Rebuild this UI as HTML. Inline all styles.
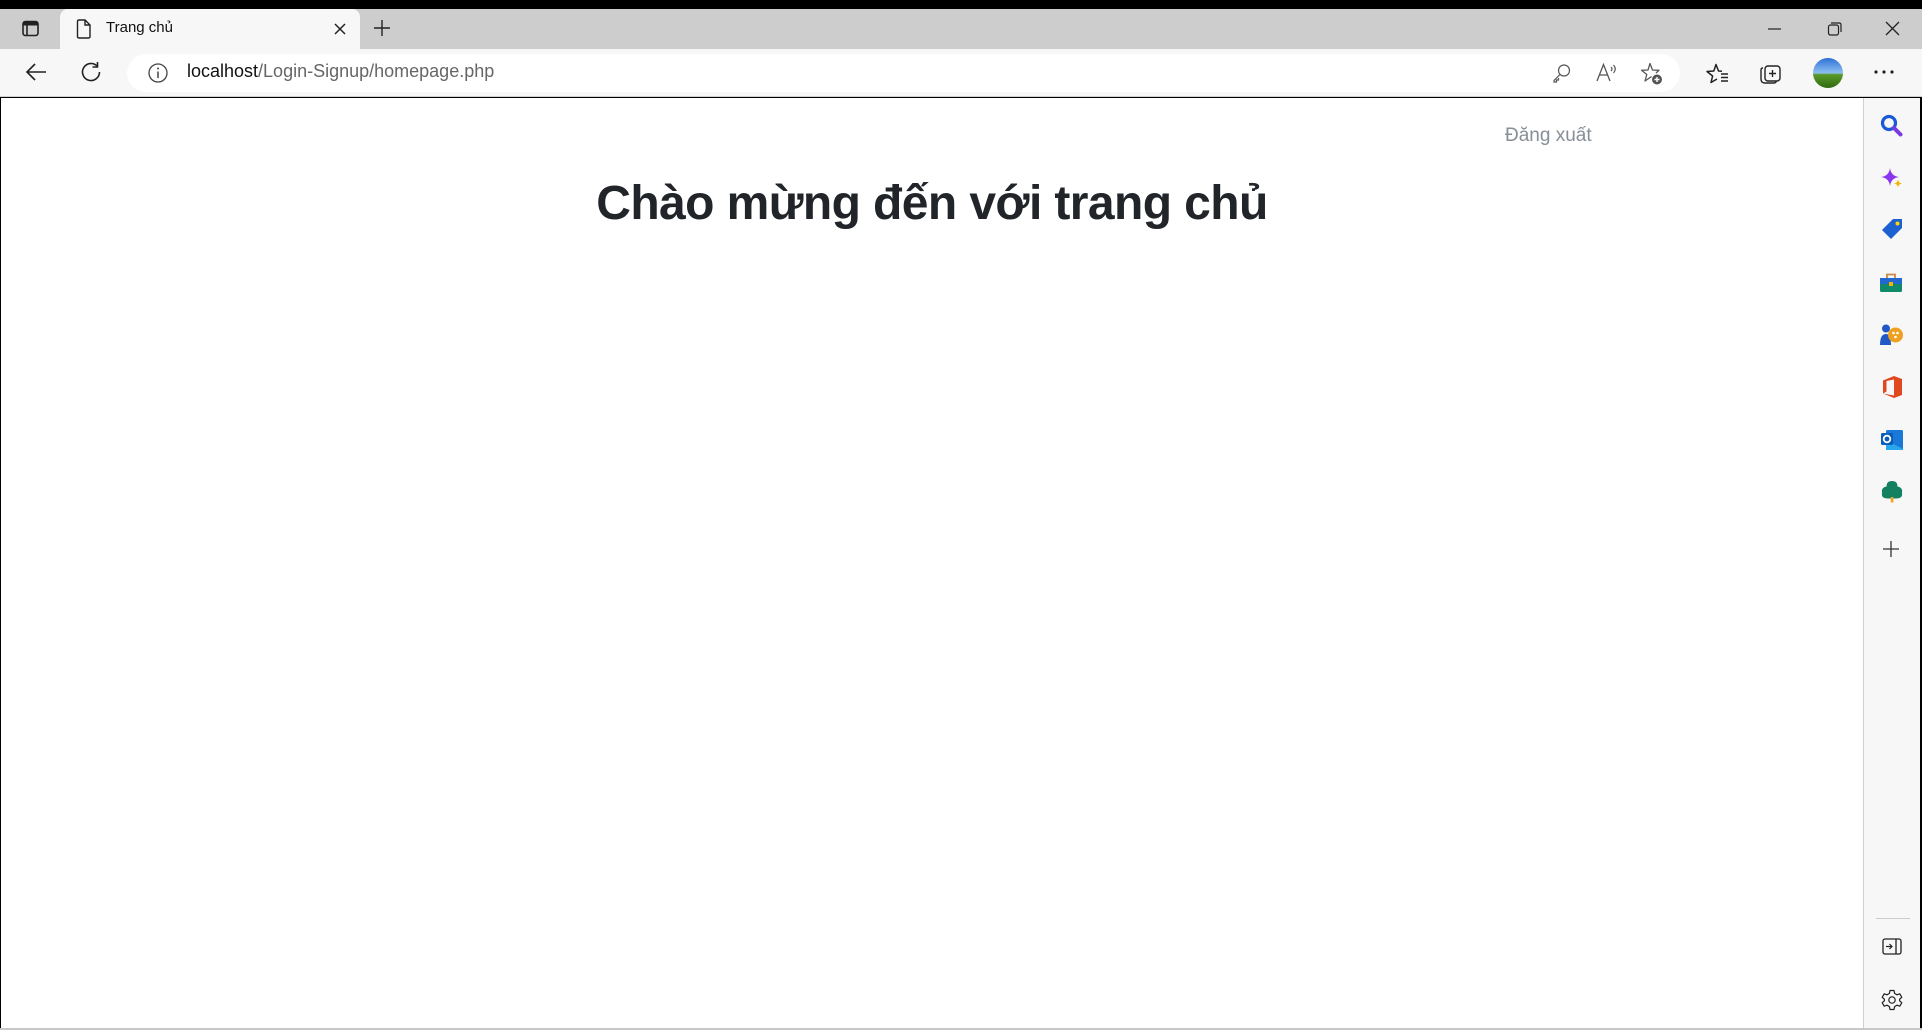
<!DOCTYPE html>
<html><head><meta charset="utf-8"><style>
*{margin:0;padding:0;box-sizing:border-box}
body{width:1922px;height:1030px;overflow:hidden;background:#000;position:relative;font-family:"Segoe UI","Liberation Sans",sans-serif}
.abs{position:absolute}
svg{position:absolute;overflow:visible}
</style></head><body>
<!-- tab strip -->
<div class="abs" style="left:0;top:9px;width:1922px;height:40px;background:#cdcdcd"></div>
<div class="abs" style="left:60px;top:9px;width:300px;height:42px;background:#f7f7f7;border-radius:8px 8px 0 0"></div>
<svg style="left:22px;top:20px" width="18" height="18"><rect x="1" y="1.5" width="15" height="14" rx="2.5" fill="none" stroke="#222" stroke-width="1.6"/><rect x="1" y="1.5" width="15" height="4" fill="#222"/><line x1="5" y1="5" x2="5" y2="15" stroke="#222" stroke-width="1.6"/></svg>
<svg style="left:76px;top:19px" width="16" height="20"><path d="M1.5 2.5Q1.5 1 3 1H9L14 6V17.5Q14 19 12.5 19H3Q1.5 19 1.5 17.5Z M9 1V6H14" fill="none" stroke="#222" stroke-width="1.4"/></svg>
<div class="abs" style="left:106px;top:19px;font-size:15px;color:#111">Trang chủ</div>
<svg style="left:334px;top:23px" width="12" height="12"><path d="M1 1L11 11M11 1L1 11" stroke="#222" stroke-width="1.5"/></svg>
<svg style="left:373px;top:19px" width="18" height="18"><path d="M9 1V17M1 9H17" stroke="#222" stroke-width="1.4"/></svg>
<svg style="left:1768px;top:28px" width="14" height="2"><path d="M0 1H13" stroke="#222" stroke-width="1.2"/></svg>
<svg style="left:1828px;top:22px" width="14" height="14"><rect x="0.5" y="3" width="10" height="10" rx="2" fill="none" stroke="#222" stroke-width="1.2"/><path d="M3 1H11Q13 1 13 3V10" fill="none" stroke="#222" stroke-width="1.2"/></svg>
<svg style="left:1885px;top:21px" width="15" height="15"><path d="M1 1L14 14M14 1L1 14" stroke="#222" stroke-width="1.3"/></svg>
<!-- toolbar -->
<div class="abs" style="left:0;top:49px;width:1922px;height:48px;background:#f7f7f7;border-bottom:1px solid #d0d0d0"></div>
<svg style="left:25px;top:62px" width="22" height="20"><path d="M21 10H2M10 2L2 10L10 18" fill="none" stroke="#222" stroke-width="1.6"/></svg>
<svg style="left:80px;top:61px" width="22" height="22"><path d="M17 5A8.5 8.5 0 1 0 19.5 11" fill="none" stroke="#222" stroke-width="1.6"/><path d="M17.5 1V6H12.5" fill="none" stroke="#222" stroke-width="1.6"/></svg>
<div class="abs" style="left:127px;top:54px;width:1553px;height:38px;background:#fff;border-radius:19px"></div>
<svg style="left:147px;top:62px" width="22" height="22"><circle cx="11" cy="11" r="9" fill="none" stroke="#444" stroke-width="1.3"/><path d="M11 9.5V16" stroke="#444" stroke-width="1.5"/><circle cx="11" cy="6.5" r="1" fill="#444"/></svg>
<div class="abs" style="left:187px;top:61px;font-size:18px;color:#111">localhost<span style="color:#666">/Login-Signup/homepage.php</span></div>
<svg style="left:1552px;top:63px" width="20" height="20"><circle cx="12" cy="7.5" r="5.5" fill="none" stroke="#555" stroke-width="1.2"/><path d="M8 11.5L2 17.5V19H4.5V17H6.5V15" fill="none" stroke="#555" stroke-width="1.2"/></svg>
<svg style="left:1596px;top:63px" width="22" height="20"><path d="M1 18L7.5 1.5L14 18M3.5 12H11.5" fill="none" stroke="#555" stroke-width="1.3"/><path d="M15 4Q17 6 15 8M17.5 2Q21 6 17.5 10" fill="none" stroke="#555" stroke-width="1.2"/></svg>
<svg style="left:1640px;top:62px" width="24" height="24"><path d="M14 16.5L15.5 18.8M11.5 14.5L5 19L6.8 12.5L1.5 8.3L8 8L10 1.5L12.5 8L19 8.3L16 11" fill="none" stroke="#555" stroke-width="1.3" stroke-linejoin="round"/><circle cx="17" cy="17.5" r="5" fill="#555"/><path d="M17 15V20M14.5 17.5H19.5" stroke="#fff" stroke-width="1.4"/></svg>
<svg style="left:1704px;top:62px" width="26" height="22"><path d="M13 17L7 20.5L8.6 14L3 9.5L9.8 9L12 2.5L14.5 9L18 9.2" fill="none" stroke="#222" stroke-width="1.5" stroke-linejoin="round"/><path d="M17 12H24M17 15.5H24M17 19H24" stroke="#222" stroke-width="1.4"/></svg>
<svg style="left:1760px;top:62px" width="22" height="22"><path d="M3 6H2.5Q1 6 1 8V17Q1 21 5 21H14Q16 21 16 19.5" fill="none" stroke="#222" stroke-width="1.4"/><rect x="5" y="4" width="15" height="15" rx="3" fill="none" stroke="#222" stroke-width="1.4"/><path d="M12.5 8V15M9 11.5H16" stroke="#222" stroke-width="1.4"/></svg>
<svg style="left:1813px;top:58px" width="30" height="30"><defs><linearGradient id="g" x1="0" y1="0" x2="0" y2="1"><stop offset="0" stop-color="#2f6fd6"/><stop offset=".5" stop-color="#8cc0f0"/><stop offset=".55" stop-color="#5a9a2a"/><stop offset="1" stop-color="#2f6a10"/></linearGradient></defs><circle cx="15" cy="15" r="15" fill="url(#g)"/></svg>
<svg style="left:1874px;top:70px" width="20" height="4"><circle cx="2" cy="2" r="1.6" fill="#222"/><circle cx="10" cy="2" r="1.6" fill="#222"/><circle cx="18" cy="2" r="1.6" fill="#222"/></svg>
<!-- page -->
<div class="abs" style="left:1px;top:98px;width:1862px;height:930px;background:#fff"></div>
<div class="abs" style="left:1505px;top:125px;font-size:19px;color:#868e96;white-space:nowrap">Đăng xuất</div>
<div class="abs" style="left:1px;top:176px;width:1862px;text-align:center;font-size:48px;font-weight:700;letter-spacing:-0.6px;color:#212529;white-space:nowrap">Chào mừng đến với trang chủ</div>
<!-- sidebar -->
<div class="abs" style="left:1863px;top:98px;width:57px;height:930px;background:#f7f7f7;border-left:1px solid #d0d0d0"></div>
<div class="abs" style="left:0;top:1028px;width:1922px;height:2px;background:#c8c8c8"></div>
<svg style="left:1880px;top:114px" width="24" height="24"><circle cx="9" cy="9" r="6.5" fill="none" stroke="#1a5ad6" stroke-width="3.2"/><path d="M14 14L20.5 20.5" stroke="#7a3ae0" stroke-width="4" stroke-linecap="round"/></svg>
<svg style="left:1880px;top:167px" width="24" height="24"><path d="M10 1Q11 9 19 10Q11 11 10 19Q9 11 1 10Q9 9 10 1Z" fill="#8a36f0"/><path d="M18 12.5Q18.5 16 22 16.5Q18.5 17 18 20.5Q17.5 17 14 16.5Q17.5 16 18 12.5Z" fill="#f5b400"/></svg>
<svg style="left:1880px;top:218px" width="24" height="24"><path d="M13 1H22V10L11 21L2 12Z" fill="#1d60d0"/><circle cx="17.5" cy="5.5" r="2" fill="#ffd400"/></svg>
<svg style="left:1879px;top:272px" width="24" height="22"><rect x="1" y="6" width="22" height="14" rx="1.5" fill="#0f8a6a"/><rect x="1" y="6" width="22" height="6" fill="#2168d0"/><path d="M8 6V2.5H16V6" fill="none" stroke="#c84" stroke-width="1.8"/><rect x="10" y="10" width="4" height="4" fill="#f5b400"/></svg>
<svg style="left:1879px;top:323px" width="26" height="24"><circle cx="7" cy="5.5" r="4" fill="#2058c8"/><path d="M1 22Q1 11 7 11Q12 11 12 22Z" fill="#2058c8"/><circle cx="16.5" cy="12" r="7.5" fill="#f0a020"/><circle cx="14.5" cy="10" r="1.3" fill="#fff"/><circle cx="18.5" cy="10" r="1.3" fill="#fff"/><circle cx="16.5" cy="14" r="1.3" fill="#fff"/></svg>
<svg style="left:1881px;top:375px" width="22" height="24"><path d="M13 1L21 4V20L13 23L2 18.5L13 20.5V4.5L5.5 6V16.5L2 18.5V5.5Z" fill="#e04820"/></svg>
<svg style="left:1880px;top:428px" width="24" height="24"><rect x="6" y="2" width="17" height="20" rx="1.5" fill="#1a78d8"/><path d="M6 12L23 21V22H6Z" fill="#28a8ea"/><rect x="1" y="5" width="12" height="12" rx="1.5" fill="#0a5cb8"/><circle cx="7" cy="11" r="3.3" fill="none" stroke="#fff" stroke-width="1.8"/></svg>
<svg style="left:1880px;top:480px" width="24" height="24"><path d="M12 1Q17.5 1 17.5 6.5Q23 7.5 22 13Q23 18.5 16 18.5H8Q1 18.5 2 13Q1 7.5 6.5 6.5Q6.5 1 12 1Z" fill="#138060"/><rect x="10.8" y="17" width="2.6" height="5.5" fill="#f5a020"/></svg>
<svg style="left:1883px;top:541px" width="16" height="16"><path d="M8 0V16M0 8H16" stroke="#333" stroke-width="1.3"/></svg>
<div class="abs" style="left:1876px;top:918px;width:34px;height:1px;background:#ccc"></div>
<svg style="left:1882px;top:938px" width="20" height="17"><rect x="1" y="1" width="18" height="15" rx="2" fill="none" stroke="#222" stroke-width="1.3"/><path d="M14 1V16" stroke="#222" stroke-width="1.3"/><path d="M4 8.5H10M7.5 6L10 8.5L7.5 11" fill="none" stroke="#222" stroke-width="1.2"/></svg>
<svg style="left:1881px;top:989px" width="22" height="22"><path d="M9 1.5H13L13.6 4.4L16 5.8L18.8 4.8L20.8 8.3L18.6 10.2V11.8L20.8 13.7L18.8 17.2L16 16.2L13.6 17.6L13 20.5H9L8.4 17.6L6 16.2L3.2 17.2L1.2 13.7L3.4 11.8V10.2L1.2 8.3L3.2 4.8L6 5.8L8.4 4.4Z" fill="none" stroke="#222" stroke-width="1.2" stroke-linejoin="round"/><circle cx="11" cy="11" r="3.2" fill="none" stroke="#222" stroke-width="1.2"/></svg>
</body></html>
